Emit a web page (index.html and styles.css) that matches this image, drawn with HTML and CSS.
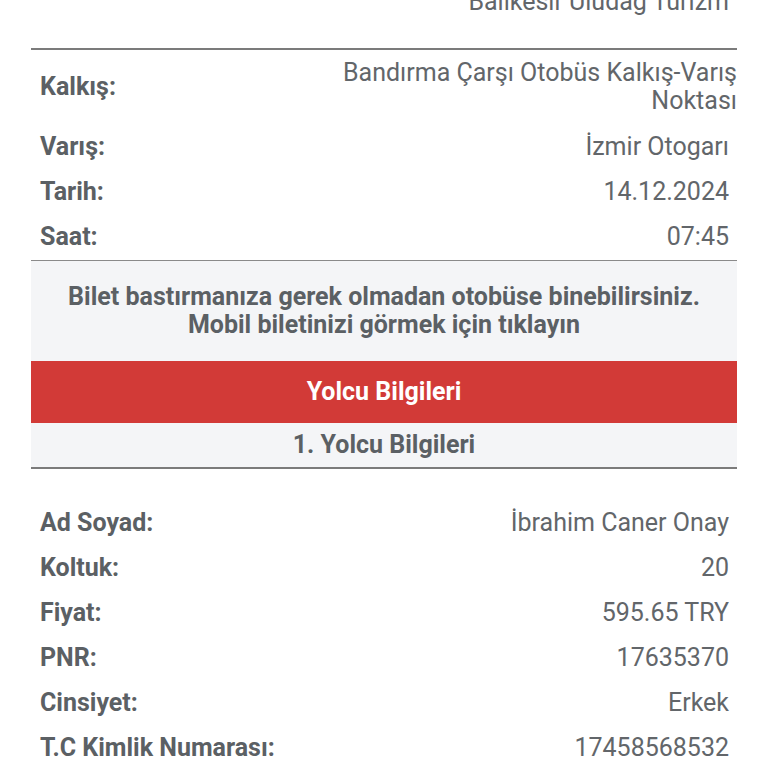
FILE: index.html
```html
<!DOCTYPE html>
<html lang="tr">
<head>
<meta charset="utf-8">
<link rel="stylesheet" href="styles.css">
</head>
<body>
<div class="ticket">
  <div class="row row-top">
    <span class="label"></span>
    <span class="value">Balikesir Uludağ Turizm</span>
  </div>
  <div class="section">
    <div class="row">
      <span class="label">Kalkış:</span>
      <span class="value value-wide">Bandırma Çarşı Otobüs Kalkış-Varış<br>Noktası</span>
    </div>
    <div class="row">
      <span class="label">Varış:</span>
      <span class="value">İzmir Otogarı</span>
    </div>
    <div class="row">
      <span class="label">Tarih:</span>
      <span class="value">14.12.2024</span>
    </div>
    <div class="row">
      <span class="label">Saat:</span>
      <span class="value">07:45</span>
    </div>
  </div>
  <div class="notice">Bilet bastırmanıza gerek olmadan otobüse binebilirsiniz.<br>Mobil biletinizi görmek için tıklayın</div>
  <div class="band">Yolcu Bilgileri</div>
  <div class="subhead">1. Yolcu Bilgileri</div>
  <div class="section passenger">
    <div class="row">
      <span class="label">Ad Soyad:</span>
      <span class="value">İbrahim Caner Onay</span>
    </div>
    <div class="row">
      <span class="label">Koltuk:</span>
      <span class="value">20</span>
    </div>
    <div class="row">
      <span class="label">Fiyat:</span>
      <span class="value">595.65 TRY</span>
    </div>
    <div class="row">
      <span class="label">PNR:</span>
      <span class="value">17635370</span>
    </div>
    <div class="row">
      <span class="label">Cinsiyet:</span>
      <span class="value">Erkek</span>
    </div>
    <div class="row">
      <span class="label">T.C Kimlik Numarası:</span>
      <span class="value">17458568532</span>
    </div>
  </div>
</div>
</body>
</html>
```
FILE: styles.css
```css
html, body {
  margin: 0;
  padding: 0;
  background: #ffffff;
  overflow: hidden;
}
body {
  font-family: Roboto, "Liberation Sans", sans-serif;
  color: #5f6368;
  font-size: 25px;
  line-height: 28px;
}
.ticket {
  width: 706px;
  margin: -12px 0 0 31px;
}
.row {
  display: flex;
  justify-content: space-between;
  align-items: center;
  padding: 8px 8px 9px 9px;
}
.row-top {
  padding: 0 8px 32px 9px;
}
.label {
  font-weight: 700;
  color: #5b6064;
  white-space: nowrap;
}
.value {
  text-align: right;
  color: #62666a;
}
.value-wide {
  margin-right: -8px;
  padding: 1px 0;
}
.section {
  border-top: 2px solid #7b7b7b;
}
.notice {
  background: #f4f5f7;
  border-top: 1.5px solid #8a8a8a;
  padding: 22px 10px 22px;
  text-align: center;
  font-weight: 700;
  color: #5b6064;
}
.band {
  background: #d23a37;
  color: #ffffff;
  text-align: center;
  font-weight: 700;
  padding: 17px 10px;
}
.subhead {
  background: #f4f5f7;
  text-align: center;
  font-weight: 700;
  color: #5b6064;
  padding: 8px 10px;
  border-bottom: 2px solid #7b7b7b;
}
.passenger {
  border-top: none;
  margin-top: 32px;
}
```
